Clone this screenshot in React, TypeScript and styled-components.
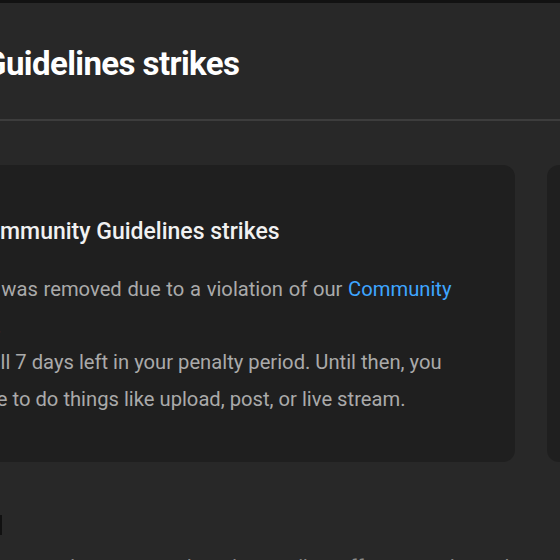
import React from "react";
import styled, { createGlobalStyle } from "styled-components";

const GlobalStyle = createGlobalStyle`
  html, body { margin: 0; padding: 0; background: #282828; }
  body { font-family: Roboto, "Noto Sans", Arial, sans-serif; overflow: hidden; }
  * { box-sizing: border-box; }
`;

const Viewport = styled.div`
  width: 560px;
  height: 560px;
  overflow: hidden;
  background: #282828;
  display: flex;
  flex-direction: column;
`;

const TopEdge = styled.div`
  height: 3px;
  flex: none;
  background: #121212;
`;

const Shift = styled.div`
  margin-left: -200px;
  width: 1100px;
  display: flex;
  flex-direction: column;
`;

const Header = styled.header`
  height: 118px;
  display: flex;
  align-items: center;
  padding: 4px 0 0 11px;
  border-bottom: 2px solid #3d3d3d;
`;

const PageTitle = styled.h1`
  margin: 0;
  font-size: 33px;
  font-weight: 700;
  color: #ffffff;
  letter-spacing: -0.6px;
  white-space: nowrap;
`;

const CardRow = styled.div`
  display: grid;
  grid-template-columns: 641px 641px;
  gap: 32px;
  padding: 44px 0 0 74px;
`;

const Card = styled.section`
  height: 297px;
  background: #1f1f1f;
  border-radius: 12px;
  padding: 52px 28px 0 28px;
`;

const TitleRow = styled.div`
  display: flex;
  align-items: center;
  gap: 22px;
  margin-bottom: 26px;
`;

const StrikeIcon = styled.div`
  width: 48px;
  height: 28px;
  flex: none;
`;

const CardTitle = styled.h2`
  margin: 0;
  font-size: 23px;
  font-weight: 500;
  color: #f1f1f1;
  white-space: nowrap;
`;

const Body = styled.p`
  margin: 0;
  font-size: 20.2px;
  line-height: 36.7px;
  color: #aaaaaa;
  white-space: nowrap;
`;

const Spaced = styled.span`
  word-spacing: 0.7px;
`;

const Link = styled.a`
  color: #3ea6ff;
  text-decoration: none;
`;

const Section = styled.div`
  padding: 53px 0 0 200px;
  display: flex;
  flex-direction: column;
  gap: 20px;
`;

const Marker = styled.div`
  width: 10px;
  height: 20px;
  margin-left: -8px;
  background: #111111;
`;

const SectionText = styled.div`
  font-size: 20px;
  color: #8a8a8a;
  white-space: nowrap;
  padding-left: 70px;
`;

export default function App() {
  return (
    <>
      <GlobalStyle />
      <Viewport>
        <TopEdge />
        <Shift>
          <Header>
            <PageTitle>Community Guidelines strikes</PageTitle>
          </Header>
          <CardRow>
            <Card>
              <TitleRow>
                <StrikeIcon />
                <CardTitle>Community Guidelines strikes</CardTitle>
              </TitleRow>
              <Body>
                Your video{" "}
                <Spaced>
                  was removed due to a violation of our <Link>Community</Link>
                </Spaced>
                <br />
                <Link>Guidelines</Link>.
                <br />
                There is still 7 days left in your penalty period. Until then, you
                <br />
                are not able to do things like upload, post, or live stream.
              </Body>
            </Card>
            <Card />
          </CardRow>
          <Section>
            <Marker />
            <SectionText>Learn more about how strikes affect your channel</SectionText>
          </Section>
        </Shift>
      </Viewport>
    </>
  );
}
